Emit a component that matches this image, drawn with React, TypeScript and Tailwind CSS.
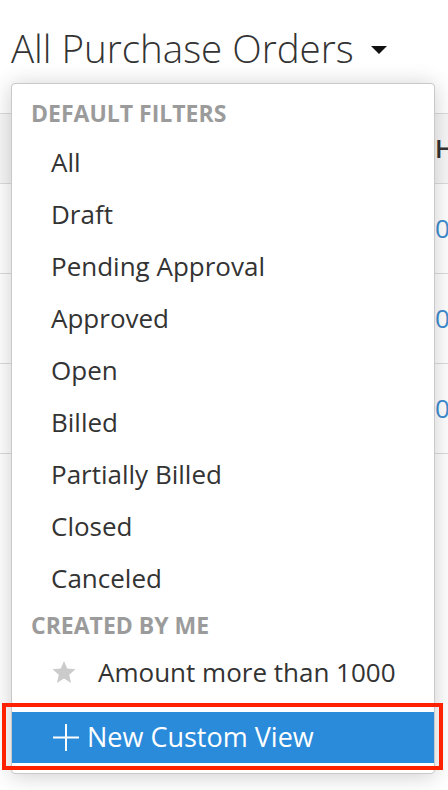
import React from "react";

const defaultFilters = [
  "All",
  "Draft",
  "Pending Approval",
  "Approved",
  "Open",
  "Billed",
  "Partially Billed",
  "Closed",
  "Canceled",
];

function Caret() {
  return (
    <svg width="16" height="8" viewBox="0 0 16 8" className="ml-[17px] mt-[4px] shrink-0">
      <polygon points="0,0 16,0 8,8" fill="#111" />
    </svg>
  );
}

function Star() {
  return (
    <svg width="24" height="23" viewBox="0 0 24 23" className="shrink-0">
      <polygon
        points="12,0 15.2,7.6 23.5,8.3 17.2,13.8 19.1,22 12,17.6 4.9,22 6.8,13.8 0.5,8.3 8.8,7.6"
        fill="#cbcbcb"
      />
    </svg>
  );
}

function Plus() {
  return (
    <svg width="26" height="27" viewBox="0 0 26 27" className="shrink-0">
      <rect x="12" y="0" width="2" height="27" fill="#fff" />
      <rect x="0" y="12.5" width="26" height="2" fill="#fff" />
    </svg>
  );
}

export default function App() {
  return (
    <div className="relative w-[448px] h-[790px] overflow-hidden bg-white font-['Open_Sans',sans-serif]">
      {/* Page title */}
      <div className="h-[113px] pt-[29px] pl-[11px]">
        <div className="flex items-center h-[38px]">
          <span className="text-[38.5px] leading-[38px] font-light text-[#333] whitespace-nowrap">
            All Purchase Orders
          </span>
          <Caret />
        </div>
      </div>

      {/* Background table */}
      <div className="flex flex-col">
        <div className="h-[71px] border-y border-[#dcdcdc] bg-[#f7f7f7] flex items-center pl-[435px] whitespace-nowrap">
          <span className="text-[25px] font-semibold text-[#333]">HELLO</span>
        </div>
        {[0, 1, 2].map((i) => (
          <div
            key={i}
            className="h-[90px] border-b border-[#dcdcdc] flex items-center pl-[435px] whitespace-nowrap"
          >
            <span className="text-[26px] text-[#408dd2]">0000</span>
          </div>
        ))}
      </div>

      {/* Dropdown menu */}
      <div className="absolute left-[11px] top-[83px] w-[424px] h-[691px] bg-white border border-[#c9c9c9] rounded-[4px] shadow-[0_2px_22px_rgba(0,0,0,0.2)] pt-[6px] pb-[10px] flex flex-col">
        <div className="h-[46px] flex items-center pl-[19px] text-[23px] font-bold text-[#9b9b9b] whitespace-nowrap">
          DEFAULT FILTERS
        </div>
        {defaultFilters.map((f) => (
          <div
            key={f}
            className="h-[52px] flex items-center pl-[39px] text-[26px] text-[#333] whitespace-nowrap"
          >
            {f}
          </div>
        ))}
        <div className="h-[42px] flex items-center pl-[19px] text-[23px] font-bold text-[#9b9b9b] whitespace-nowrap">
          CREATED BY ME
        </div>
        <div className="h-[52px] flex items-center pl-[40px] text-[26px] text-[#333] whitespace-nowrap">
          <Star />
          <span className="ml-[22px]">Amount more than 1000</span>
        </div>
        <div className="mt-[14px] h-[51px] bg-[#2a8bdb] flex items-center pl-[41px] text-[27px] text-white whitespace-nowrap">
          <Plus />
          <span className="ml-[8px]">New Custom View</span>
        </div>
      </div>

      {/* Highlight annotation */}
      <div className="absolute left-[2px] top-[703px] w-[441px] h-[67px] border-[4px] border-[#ff2200] pointer-events-none" />
    </div>
  );
}
